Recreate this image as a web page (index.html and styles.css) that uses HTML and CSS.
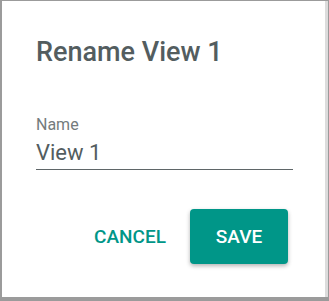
FILE: index.html
```html
<!DOCTYPE html>
<html lang="en">
<head>
    <meta charset="UTF-8">
    <meta name="viewport" content="width=device-width, initial-scale=1.0">
    <title>Rename View 1</title>
    <link rel="stylesheet" href="styles.css">
</head>
<body>
    <div class="dialog">
        <h2 class="dialog-title">Rename View 1</h2>

        <label class="field">
            <span class="field-label">Name</span>
            <input class="field-input" type="text" value="View 1">
        </label>

        <div class="actions">
            <button class="btn btn-text">CANCEL</button>
            <button class="btn btn-primary">SAVE</button>
        </div>
    </div>
</body>
</html>
```

FILE: styles.css
```css
:root {
    --teal: #009688;
    --text-dark: #535d5f;
    --text-muted: #737b7c;
}

html, body {
    margin: 0;
    height: 100%;
}

body {
    background: #9b9b9b;
    font-family: Roboto, "Liberation Sans", sans-serif;
    overflow: hidden;
}

.dialog {
    box-sizing: border-box;
    margin: 1px 0 0 2px;
    width: 326px;
    height: 296px;
    background: #fff;
    border-right: 3px solid #dcdcdc;
    padding: 36px 37px 0 34px;
}

.dialog-title {
    margin: 0;
    font-size: 27px;
    line-height: 30px;
    font-weight: 500;
    color: var(--text-dark);
}

.field {
    display: block;
    margin-top: 48px;
}

.field-label {
    display: block;
    font-size: 16px;
    line-height: 20px;
    color: var(--text-muted);
}

.field-input {
    display: block;
    box-sizing: content-box;
    width: 257px;
    margin: 4px 0 0;
    padding: 0 0 2px;
    height: 28px;
    border: 0;
    border-bottom: 1px solid #5f6668;
    font-family: inherit;
    font-size: 22px;
    line-height: 28px;
    color: var(--text-dark);
    background: transparent;
    outline: none;
}

.actions {
    display: flex;
    justify-content: flex-end;
    align-items: center;
    margin-top: 39px;
}

.btn {
    border: 0;
    padding: 0;
    background: none;
    font-family: inherit;
    font-size: 19px;
    font-weight: 500;
    cursor: pointer;
}

.btn-text {
    color: var(--teal);
    margin-right: 24px;
}

.btn-primary {
    width: 98px;
    height: 55px;
    background: var(--teal);
    color: #fff;
    border-radius: 4px;
    box-shadow: 0 2px 4px rgba(0,0,0,0.3);
}
```
